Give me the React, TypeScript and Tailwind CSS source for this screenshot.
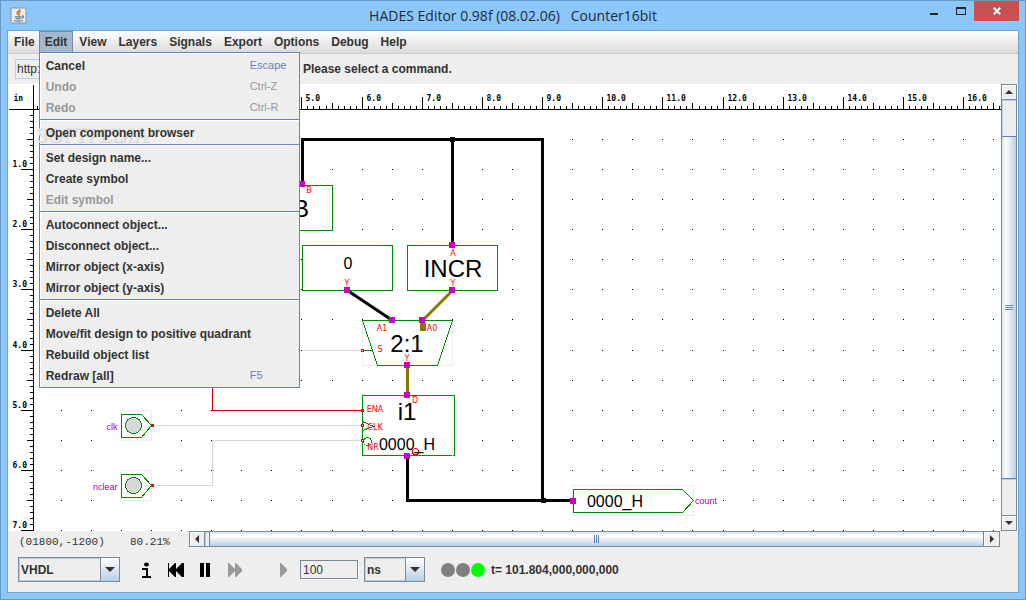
import { useState } from 'react';
import type { ReactNode } from 'react';
import clsx from 'clsx';

type MenuEntry = { label: string; shortcut?: string; disabled?: boolean };

const menus = ['File', 'Edit', 'View', 'Layers', 'Signals', 'Export', 'Options', 'Debug', 'Help'];

const editMenu: MenuEntry[][] = [
  [
    { label: 'Cancel', shortcut: 'Escape' },
    { label: 'Undo', shortcut: 'Ctrl-Z', disabled: true },
    { label: 'Redo', shortcut: 'Ctrl-R', disabled: true },
  ],
  [{ label: 'Open component browser' }],
  [{ label: 'Set design name...' }, { label: 'Create symbol' }, { label: 'Edit symbol', disabled: true }],
  [
    { label: 'Autoconnect object...' },
    { label: 'Disconnect object...' },
    { label: 'Mirror object (x-axis)' },
    { label: 'Mirror object (y-axis)' },
  ],
  [
    { label: 'Delete All' },
    { label: 'Move/fit design to positive quadrant' },
    { label: 'Rebuild object list' },
    { label: 'Redraw [all]', shortcut: 'F5' },
  ],
];

// world units (inches) to canvas pixels at 80.21% zoom
const wx = (u: number) => Math.round(0.65 + 60.16 * u);
const wy = (u: number) => Math.round(108.9 + 60.16 * u);

const range = (from: number, to: number) => Array.from({ length: to - from }, (_, i) => from + i);

function TitleBar() {
  return (
    <header className="relative flex h-[29px] shrink-0 items-center justify-center">
      <svg className="absolute left-[3px] top-[6px]" width="17" height="17" viewBox="0 0 17 17">
        <rect x="1" y="1" width="15" height="15" rx="1" fill="#eceff1" stroke="#8a9299" />
        <path d="M9.5 2c.8 1.6-3 2.600-2.400 4.200.2.8 1.100 1.100 1 2.300M10.800 4.200C9 5 8.400 5.800 9.200 6.800c.4.6.2 1.200-.3 1.600" fill="none" stroke="#ea7a1c" strokeWidth="1.500" />
        <path d="M5 9.500c1 .6 5.400.6 6.600 0M5.500 11.300c1.600.6 4 .6 5.300 0M4 13.500c2.500.8 6.500.8 9 0M12 9c1.900-.6 2 1.500-.2 2.200" fill="none" stroke="#4f7d9d" strokeWidth="1.200" />
      </svg>
      <h1 className="whitespace-pre font-['Open_Sans','Noto_Sans',sans-serif] text-[14px] font-normal text-[#1f2a35]">
        HADES Editor 0.98f (08.02.06){'   '}Counter16bit
      </h1>
      <div className="absolute right-0 top-0 flex h-5">
        <button aria-label="Minimize" className="flex w-[26px] items-center justify-center">
          <svg width="8" height="20"><path d="M0 12h8v2H0z" fill="#222" /></svg>
        </button>
        <button aria-label="Maximize" className="flex w-[27px] items-center justify-center">
          <svg width="10" height="20" shapeRendering="crispEdges">
            <path d="M0 6h10v8H0zM1 8v5h8V8z" fill="#222" fillRule="evenodd" />
          </svg>
        </button>
        <button aria-label="Close" className="flex w-[45px] items-center justify-center bg-[#c75050]">
          <svg width="8" height="8" viewBox="0 0 8 8">
            <path d="M.8.800l6.400 6.400M7.200.800L.8 7.200" stroke="#fff" strokeWidth="2" />
          </svg>
        </button>
      </div>
    </header>
  );
}

function EditMenu() {
  return (
    <div role="menu" className="absolute left-0 top-[21px] z-10 w-[261px] border border-[#6382bf] bg-[#eee] pb-px pt-[2px] shadow-[inset_1px_1px_0_#fff]">
      <div className="pointer-events-none absolute left-[-4px] top-[70px] whitespace-nowrap font-['Liberation_Serif',serif] text-[21px] font-normal leading-6 text-[#e6e6e6] [text-shadow:1px_1px_0_#d4d4d4]">
        SOFTPEDIA<sup className="text-[8px]">™</sup>
      </div>
      {editMenu.map((group, i) => (
        <div key={i} className={clsx('relative', i > 0 && 'mt-px border-t border-[#6382bf] pt-[2px] shadow-[inset_0_1px_0_#fff]')}>
          {group.map((entry) => (
            <button
              key={entry.label}
              role="menuitem"
              disabled={entry.disabled}
              className={clsx('flex h-[21px] w-full items-center pl-[6px] text-left', entry.disabled ? 'text-[#999]' : 'text-[#333]')}
            >
              <span className="w-[204px] whitespace-nowrap">{entry.label}</span>
              <span className={clsx('text-[11px] font-normal', !entry.disabled && 'text-[#6382bf]')}>{entry.shortcut}</span>
            </button>
          ))}
        </div>
      ))}
    </div>
  );
}

function MenuBar() {
  const [open, setOpen] = useState<string | null>('Edit');
  return (
    <nav className="flex h-[23px] shrink-0 border-b border-[#ccc] bg-linear-to-b from-white to-[#dadada]">
      {menus.map((name) => (
        <div key={name} className="relative">
          <button
            onClick={() => setOpen(open === name ? null : name)}
            className={clsx(
              'h-[21px] pl-[6px]',
              name === 'File' ? 'pr-1' : 'pr-[6px]',
              open === name && 'bg-[#a3b8cc] shadow-[inset_1px_1px_0_#7a8a99,inset_-1px_0_0_#7a8a99]'
            )}
          >
            {name}
          </button>
          {name === 'Edit' && open === 'Edit' && <EditMenu />}
        </div>
      ))}
    </nav>
  );
}

function Rulers() {
  return (
    <>
      <g stroke="#000">
        <path d="M8 109H2000M33 84V1200" />
        {range(6, 260).map((n) => (
          <path key={n} d={`M${wx(n / 10)} 109V${n % 10 === 0 ? 96 : n % 5 === 0 ? 102 : 105}`} />
        ))}
        {range(1, 160).map((n) => (
          <path key={n} d={`M33 ${wy(n / 10)}H${n % 10 === 0 ? 20 : n % 5 === 0 ? 26 : 29}`} />
        ))}
      </g>
      <g className="font-['DejaVu_Sans_Mono',monospace] text-[8px] font-bold">
        <text x="13" y="100">in</text>
        {range(1, 17).map((n) => (
          <text key={n} x={wx(n) + 4} y="100">{n}.0</text>
        ))}
        {range(1, 8).map((n) => (
          <text key={n} x="12" y={wy(n) - 3}>{n}.0</text>
        ))}
      </g>
    </>
  );
}

function Grid() {
  return (
    <g fill="#000" stroke="none">
      {range(1, 30).flatMap((row) =>
        range(2, 52).map((col) => (
          <rect key={`${row}-${col}`} x={wx(col / 2)} y={wy(row / 2)} width="1" height="1" transform="translate(-.5 -.5)" />
        ))
      )}
    </g>
  );
}

function Wires() {
  return (
    <g fill="none">
      <path d="M302 350H362M153 425H362M153 485H212V440H362" stroke="#d8d8d8" />
      <path d="M212 380V410H362" stroke="#d80000" />
      <g stroke="#000" strokeWidth="3">
        <path d="M302 184V139H542V500M452 139V245M407 456V500H573" strokeLinejoin="round" />
        <path d="M347 290L392 320" shapeRendering="auto" />
      </g>
      <g stroke="#8f7300" strokeWidth="3">
        <path d="M407 365V395" />
        <path d="M452 290L422 320" shapeRendering="auto" />
      </g>
      <circle cx="452" cy="139" r="3" fill="#000" />
      <circle cx="543" cy="500" r="3" fill="#000" />
    </g>
  );
}

function InputSymbol({ x, y, name }: { x: number; y: number; name: string }) {
  return (
    <g transform={`translate(${x} ${y})`}>
      <rect width="30" height="30" fill="#fff" stroke="#eee" />
      <path d="M0 4H20L30 15L20 27H0Z" fill="none" stroke="#008b00" />
      <circle cx="12" cy="15" r="8" fill="#d8d8d8" stroke="#008b00" />
      <rect x="29.5" y="13.5" width="3" height="3" fill="#f00" />
      <text x="-4" y="19" textAnchor="end" fill="#a000a0" className="text-[9px]">{name}</text>
    </g>
  );
}

const pins = [
  [302, 184], [452, 245], [347, 290], [452, 290], [392, 320],
  [422, 320], [407, 365], [407, 395], [407, 456], [573, 501],
];

const pinLabels: [string, number, number][] = [
  ['B', 309, 193], ['A', 453, 256], ['Y', 347, 286], ['Y', 453, 286], ['A1', 382, 331], ['A0', 432, 331],
  ['S', 380, 352], ['Y', 407, 361], ['D', 415, 403], ['ENA', 375, 412], ['CLK', 375, 430], ['NR', 373, 450],
];

function Symbols() {
  return (
    <>
      <g fill="#fff" stroke="#008b00">
        <rect x="242" y="185" width="90" height="45" />
        <rect x="302" y="245" width="90" height="45" />
        <rect x="407" y="245" width="90" height="45" />
        <rect x="362" y="320" width="90" height="45" stroke="#eee" />
        <path d="M362 320H452L437 365H377Z" />
        <path d="M362 350H372" />
        <rect x="362" y="395" width="92" height="60" />
        <path d="M452 396V455" stroke="#eee" />
        <path d="M362 421L373 426L362 430" fill="none" />
        <circle cx="367" cy="441" r="4" fill="none" />
        <rect x="572" y="485" width="121" height="30" stroke="#eee" />
        <path d="M573 489H682L693 500L682 512H573Z" />
      </g>
      <InputSymbol x={121} y={410} name="clk" />
      <InputSymbol x={121} y={470} name="nclear" />
    </>
  );
}

function PinLayer() {
  return (
    <>
      <circle cx="415" cy="451" r="3" fill="none" stroke="#f00" />
      <g transform="translate(-.5 -.5)">
        <path d="M361 349h3v3h-3zM361 424h3v3h-3zM361 439h3v3h-3zM361 409h3v3h-3z" fill="#f00" />
        <path d="M362 350h1v1h-1zM362 425h1v1h-1zM362 440h1v1h-1z" fill="#fff" />
        <g fill="#c800c8">
          {pins.map(([x, y]) => (
            <rect key={`${x}-${y}`} x={x - 3} y={y - 3} width="6" height="6" />
          ))}
        </g>
        <path d="M420 323h6v8h-6z" fill="#8f7300" />
        <g fill="#f00" textAnchor="middle" className="font-['DejaVu_Sans',sans-serif] text-[8px]">
          {pinLabels.map(([label, x, y]) => (
            <text key={`${label}-${x}-${y}`} x={x} y={y}>{label}</text>
          ))}
        </g>
        <g fill="#000" textAnchor="middle" className="text-[24px]">
          <text x="301" y="217">B</text>
          <text x="453" y="277">INCR</text>
          <text x="407" y="352">2:1</text>
          <text x="407" y="420">i1</text>
        </g>
        <g fill="#000" textAnchor="middle" className="text-[16px]">
          <text x="348" y="269">0</text>
          <text x="407" y="450">0000_H</text>
          <text x="615" y="507">0000_H</text>
        </g>
        <text x="695" y="504" fill="#a000a0" className="text-[9px]">count</text>
      </g>
    </>
  );
}

function Schematic() {
  return (
    <svg className="min-w-0 flex-1 bg-white font-['Liberation_Sans',Arial,sans-serif] font-normal" shapeRendering="crispEdges">
      {/* half pixel shift keeps one pixel strokes sharp */}
      <g transform="translate(-7.5 -83.5)">
        <Grid />
        <Rulers />
        <Symbols />
        <Wires />
        <PinLayer />
      </g>
    </svg>
  );
}

function ArrowButton({ label, d, className }: { label: string; d: string; className: string }) {
  return (
    <button aria-label={label} className={clsx('flex shrink-0 items-center justify-center border-[#7a8a99] bg-[#eee] shadow-[inset_1px_1px_0_#fff]', className)}>
      <svg width="8" height="8" viewBox="0 0 8 8"><path d={d} fill="#333" /></svg>
    </button>
  );
}

function VerticalScrollbar() {
  return (
    <div className="flex w-[17px] shrink-0 flex-col border-r border-r-white bg-[#eee]">
      <div className="flex min-h-0 flex-1 flex-col border border-[#7a8a99]">
        <ArrowButton label="Scroll up" d="M0 6L4 2L8 6Z" className="h-[15px] border-b" />
        <div className="flex-[36] shadow-[inset_1px_1px_0_#b8cfe5]" />
        <div className="flex flex-[342] flex-col items-center justify-center gap-px border-y border-[#6382bf] bg-linear-to-r from-[#dbe7f3] via-white via-30% to-[#b8cfe5] shadow-[0_1px_0_#b8cfe5]">
          <i className="h-px w-2 bg-[#6382bf]" />
          <i className="h-px w-2 bg-[#6382bf]" />
          <i className="h-px w-2 bg-[#6382bf]" />
        </div>
        <div className="flex-[36]" />
        <ArrowButton label="Scroll down" d="M0 2L4 6L8 2Z" className="h-[15px] border-t" />
      </div>
    </div>
  );
}

function HorizontalScrollbar() {
  return (
    <div className="mr-[18px] flex h-4 min-w-0 flex-1 border border-[#7a8a99] bg-[#eee]">
      <ArrowButton label="Scroll left" d="M6 0L2 4L6 8Z" className="w-[15px] border-r" />
      <div className="w-1 shadow-[inset_1px_1px_0_#b8cfe5]" />
      <div className="flex flex-1 items-center justify-center gap-px border-x border-[#6382bf] bg-linear-to-b from-[#dbe7f3] via-white via-30% to-[#b8cfe5]">
        <i className="h-2 w-px bg-[#6382bf]" />
        <i className="h-2 w-px bg-[#6382bf]" />
        <i className="h-2 w-px bg-[#6382bf]" />
      </div>
      <ArrowButton label="Scroll right" d="M2 0L6 4L2 8Z" className="w-[15px]" />
    </div>
  );
}

function ComboBox({ label, options, className }: { label: string; options: string[]; className: string }) {
  return (
    <div className={clsx('relative h-[25px] border border-[#7a8a99]', className)}>
      <select aria-label={label} className="block h-full w-full appearance-none border border-[#b8cfe5] bg-[#eee] px-px outline-none">
        {options.map((o) => (
          <option key={o}>{o}</option>
        ))}
      </select>
      <span className="pointer-events-none absolute inset-y-0 right-0 flex w-[19px] items-center justify-center border-l border-[#7a8a99] bg-linear-to-b from-white to-[#b8cfe5]">
        <svg width="10" height="5"><path d="M0 0h10L5 5z" fill="#333" /></svg>
      </span>
    </div>
  );
}

function IconButton({ label, disabled, children }: { label: string; disabled?: boolean; children: ReactNode }) {
  return (
    <button aria-label={label} disabled={disabled} className={clsx('flex h-5 w-[30px] items-center justify-center', disabled ? 'text-[#999]' : 'text-black')}>
      <svg width="18" height="18" viewBox="0 0 18 18" fill="currentColor">{children}</svg>
    </button>
  );
}

function SimulationBar() {
  return (
    <div className="flex h-[45px] shrink-0 items-center pl-[10px]">
      <ComboBox label="Simulation language" options={['VHDL', 'Verilog']} className="w-[102px]" />
      <div className="ml-[11px] flex">
        <IconButton label="Info">
          <ellipse cx="9.500" cy="3.500" rx="2.500" ry="2" />
          <path d="M5 7h6v8h3v2H5v-2h4V9H5z" />
        </IconButton>
        <IconButton label="Rewind">
          <path d="M1 2h1v6l6-6h1v6l6-6h2v14h-2l-6-6v6H8l-6-6v6H1z" />
        </IconButton>
        <IconButton label="Pause">
          <path d="M3 2h4v14H3zM9 2h4v14H9z" />
        </IconButton>
        <IconButton label="Fast forward" disabled>
          <path d="M1 2h1l6 6V2h1l6 6v2l-6 6H8v-6l-6 6H1z" />
        </IconButton>
      </div>
      <div className="ml-[18px] flex">
        <IconButton label="Step" disabled>
          <path d="M5 2h1l6 6v2l-6 6H5z" />
        </IconButton>
      </div>
      <input
        aria-label="Step time"
        defaultValue="100"
        className="ml-[1px] h-[19px] w-[58px] border border-[#7a8a99] bg-[#eee] px-[2px] font-normal shadow-[1px_1px_0_#fff] outline-none"
      />
      <ComboBox label="Time unit" options={['ns', 'us', 'ms']} className="ml-[6px] w-[61px]" />
      <div className="ml-4 flex gap-px">
        <span className="size-[14px] rounded-full bg-[#808080]" />
        <span className="size-[14px] rounded-full bg-[#808080]" />
        <span className="size-[14px] rounded-full bg-[#0f0]" />
      </div>
      <span className="ml-[6px]">t= 101.804,000,000,000</span>
    </div>
  );
}

export default function App() {
  return (
    <div className="flex h-screen flex-col overflow-hidden border border-[#6a98c5] bg-[#8cc7fa] px-[6px] pb-[6px] font-['Liberation_Sans',Arial,sans-serif] text-[12px] font-bold text-[#333]">
      <TitleBar />
      <main className="flex min-h-0 flex-1 flex-col border border-[#6fa3d6] bg-[#eee]">
        <MenuBar />
        <div className="flex h-[30px] shrink-0 items-center pl-[7px]">
          <input
            aria-label="Design URL"
            defaultValue="http:"
            className="h-5 w-[282px] border border-[#b8cfe5] bg-[#eee] px-px font-normal outline-none"
          />
          <span className="ml-[6px]">Please select a command.</span>
        </div>
        <div className="flex min-h-0 flex-1">
          <Schematic />
          <VerticalScrollbar />
        </div>
        <div className="flex h-4 shrink-0 items-start">
          <div className="flex w-[181px] items-center whitespace-nowrap pl-[11px] pt-1 font-['Liberation_Mono',monospace] text-[11px] font-normal leading-[14px]">
            <span className="w-[111px]">(01800,-1200)</span>
            <span>80.21%</span>
          </div>
          <HorizontalScrollbar />
        </div>
        <SimulationBar />
      </main>
    </div>
  );
}
